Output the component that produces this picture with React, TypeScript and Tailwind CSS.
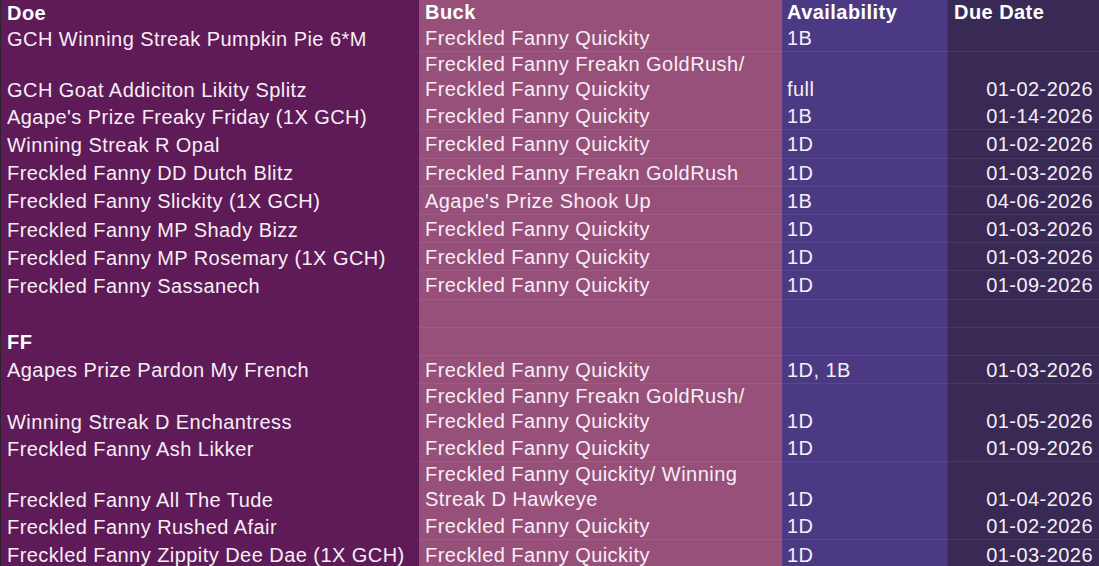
import React from "react";

type Row = {
  cells: [string, string, string, string];
  double?: boolean;
  bold?: boolean;
  header?: boolean;
};

const rows: Row[] = [
  { cells: ["Doe", "Buck", "Availability", "Due Date"], bold: true, header: true },
  { cells: ["GCH Winning Streak Pumpkin Pie 6*M", "Freckled Fanny Quickity", "1B", ""] },
  {
    cells: ["GCH Goat Addiciton Likity Splitz", "Freckled Fanny Freakn GoldRush/\nFreckled Fanny Quickity", "full", "01-02-2026"],
    double: true,
  },
  { cells: ["Agape's Prize Freaky Friday (1X GCH)", "Freckled Fanny Quickity", "1B", "01-14-2026"] },
  { cells: ["Winning Streak R Opal", "Freckled Fanny Quickity", "1D", "01-02-2026"] },
  { cells: ["Freckled Fanny DD Dutch Blitz", "Freckled Fanny Freakn GoldRush", "1D", "01-03-2026"] },
  { cells: ["Freckled Fanny Slickity (1X GCH)", "Agape's Prize Shook Up", "1B", "04-06-2026"] },
  { cells: ["Freckled Fanny MP Shady Bizz", "Freckled Fanny Quickity", "1D", "01-03-2026"] },
  { cells: ["Freckled Fanny MP Rosemary (1X GCH)", "Freckled Fanny Quickity", "1D", "01-03-2026"] },
  { cells: ["Freckled Fanny Sassanech", "Freckled Fanny Quickity", "1D", "01-09-2026"] },
  { cells: ["", "", "", ""] },
  { cells: ["FF", "", "", ""], bold: true },
  { cells: ["Agapes Prize Pardon My French", "Freckled Fanny Quickity", "1D, 1B", "01-03-2026"] },
  {
    cells: ["Winning Streak D Enchantress", "Freckled Fanny Freakn GoldRush/\nFreckled Fanny Quickity", "1D", "01-05-2026"],
    double: true,
  },
  { cells: ["Freckled Fanny Ash Likker", "Freckled Fanny Quickity", "1D", "01-09-2026"] },
  {
    cells: ["Freckled Fanny All The Tude", "Freckled Fanny Quickity/ Winning\nStreak D Hawkeye", "1D", "01-04-2026"],
    double: true,
  },
  { cells: ["Freckled Fanny Rushed Afair", "Freckled Fanny Quickity", "1D", "01-02-2026"] },
  { cells: ["Freckled Fanny Zippity Dee Dae (1X GCH)", "Freckled Fanny Quickity", "1D", "01-03-2026"] },
];

export default function App() {
  return (
    <div
      className="w-[1099px] h-[566px] overflow-hidden bg-[#5e1b57] border-l border-[#2e2430]"
      style={{ fontFamily: '"Liberation Sans", Arial, sans-serif' }}
    >
      {rows.map((r, i) => {
        const h = r.header ? "h-[24px]" : r.double ? "h-[50px]" : "h-[28.2px]";
        const align = r.double ? "items-end" : r.header ? "items-center" : "items-center pt-[2px]";
        const weight = r.bold ? "font-bold text-white" : "text-[#f8eef6]";
        return (
          <div
            key={i}
            className={`grid grid-cols-[418px_363px_165px_152px] ${h} text-[20px] leading-[25px] tracking-[0.45px] ${weight}`}
          >
            <div className={`flex ${align} bg-[#5e1b57] pl-[6px] whitespace-nowrap`}>{r.cells[0]}</div>
            <div className={`flex ${align} bg-[#975079] pl-[6px] border-b border-[#9d5c85] whitespace-pre-line`}>
              {r.cells[1]}
            </div>
            <div className={`flex ${align} bg-[#4b3a83] pl-[5px] border-b border-[#57478c]`}>{r.cells[2]}</div>
            <div
              className={`flex ${align} ${r.header ? "justify-start pl-[6px]" : "justify-end pr-[6px]"} bg-[#382a55] border-b border-l border-[#463a63]`}
            >
              {r.cells[3]}
            </div>
          </div>
        );
      })}
    </div>
  );
}
